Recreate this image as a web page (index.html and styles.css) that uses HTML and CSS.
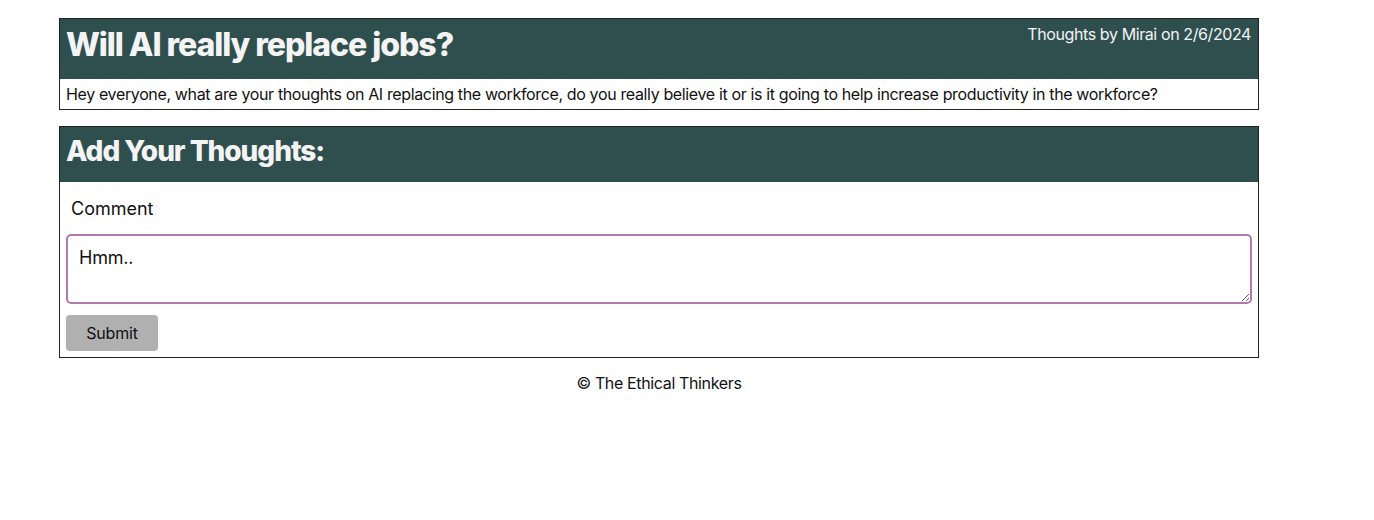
FILE: index.html
```html
<!DOCTYPE html>
<html>
<head>
<meta charset="utf-8">
<link rel="stylesheet" href="styles.css">
</head>
<body>
<main class="page">
  <article class="card post">
    <header class="card-head post-head">
      <h1 class="post-title">Will AI really replace jobs?</h1>
      <span class="post-meta">Thoughts by Mirai on 2/6/2024</span>
    </header>
    <p class="post-body">Hey everyone, what are your thoughts on AI replacing the workforce, do you really believe it or is it going to help increase productivity in the workforce?</p>
  </article>
  <section class="card reply">
    <header class="card-head reply-head">
      <h2 class="reply-title">Add Your Thoughts:</h2>
    </header>
    <form class="reply-form">
      <label class="reply-label" for="comment">Comment</label>
      <textarea id="comment" class="reply-input">Hmm..</textarea>
      <button type="button" class="reply-submit">Submit</button>
    </form>
  </section>
  <footer class="site-foot">© The Ethical Thinkers</footer>
</main>
</body>
</html>
```
FILE: styles.css
```css
* { box-sizing: border-box; }
body {
  margin: 0;
  font-family: Inter, "Noto Sans", sans-serif;
  color: #111;
  background: #fff;
  letter-spacing: -0.36px;
}
.page {
  width: 1200px;
  margin: 18px 0 0 59px;
  display: flex;
  flex-direction: column;
  gap: 16px;
}
.card {
  border: 1px solid #222;
}
.card-head {
  background: #2f4f4f;
  color: #f4f4f4;
}
.post-head {
  height: 60px;
  display: flex;
  justify-content: space-between;
  align-items: flex-start;
  padding: 0 7px 0 6px;
}
.post-title {
  margin: 6px 0 0;
  font-size: 32px;
  font-weight: 800;
  line-height: 40px;
  letter-spacing: -1.05px;
}
.post-meta {
  margin-top: 5px;
  font-size: 16px;
  line-height: 20px;
  letter-spacing: -0.4px;
}
.post-body {
  margin: 0;
  padding: 5px 6px;
  font-size: 16px;
  line-height: 20px;
}
.reply-head {
  height: 55px;
  padding: 0 6px;
}
.reply-title {
  margin: 0;
  padding-top: 6px;
  font-size: 28px;
  font-weight: 800;
  line-height: 36px;
  letter-spacing: -1.05px;
}
.reply-form {
  display: flex;
  flex-direction: column;
  align-items: flex-start;
  padding: 16px 6px 6px;
}
.reply-label {
  font-size: 18px;
  line-height: 22px;
  padding-left: 5px;
  margin-bottom: 14px;
  letter-spacing: 0;
}
.reply-input {
  width: 100%;
  height: 70px;
  border: 2px solid #b07ab0;
  border-radius: 5px;
  padding: 11px 11px;
  font-family: Inter, "Noto Sans", sans-serif;
  font-size: 18px;
  line-height: 22px;
  color: #111;
  margin: 0 0 11px;
  outline: none;
  letter-spacing: -0.2px;
}
.reply-submit {
  width: 92px;
  height: 36px;
  background: #b0b0b0;
  border: none;
  border-radius: 4px;
  font-family: Inter, "Noto Sans", sans-serif;
  font-size: 16px;
  color: #111;
  padding: 0;
  letter-spacing: -0.2px;
}
.site-foot {
  margin-top: -1px;
  text-align: center;
  font-size: 16px;
  line-height: 20px;
}
```
